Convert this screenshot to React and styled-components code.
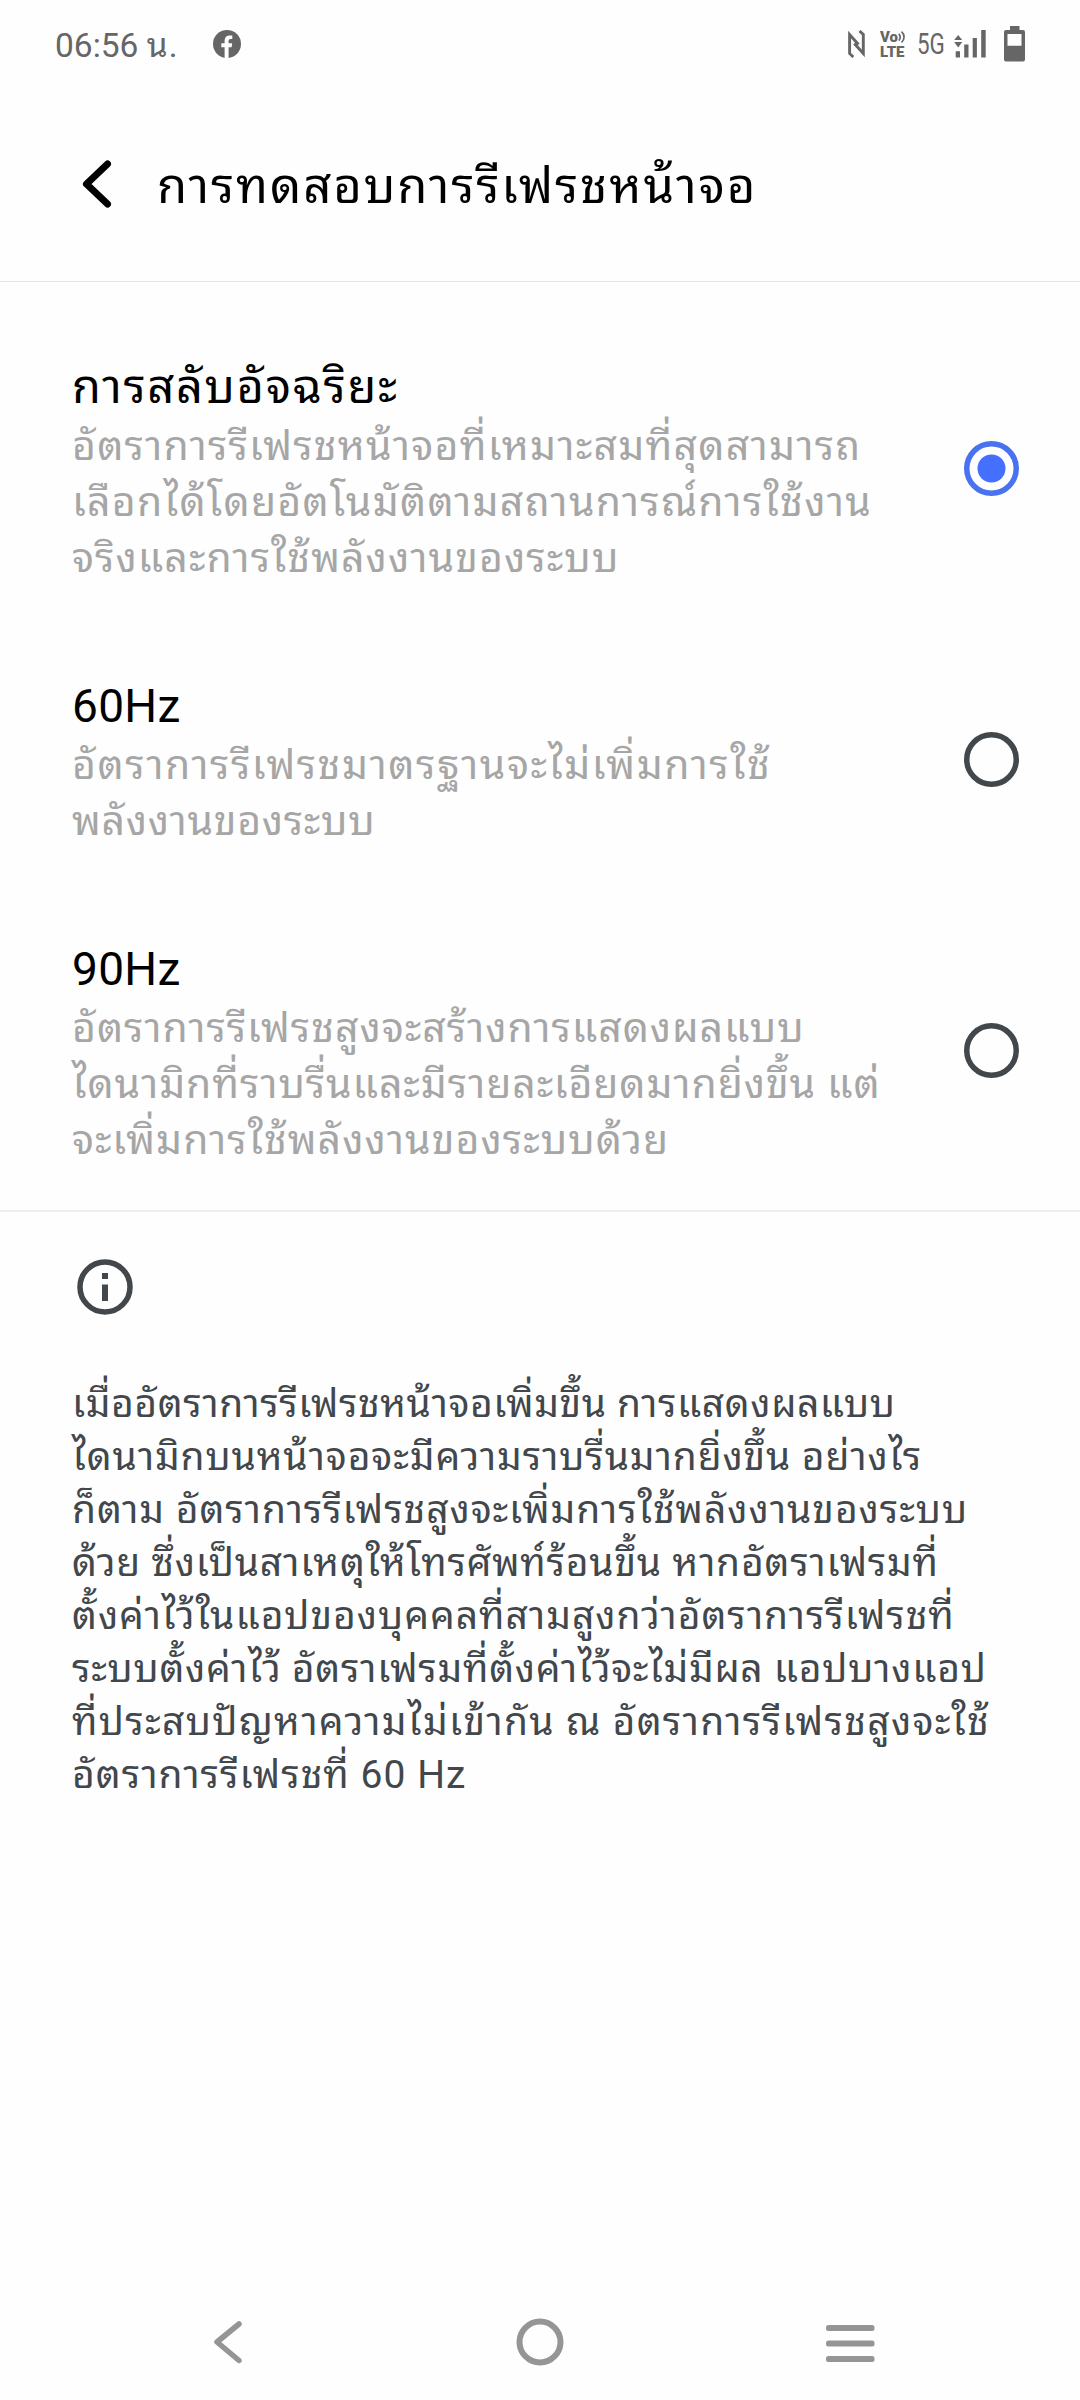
import React, { useState } from "react";
import styled, { createGlobalStyle } from "styled-components";

const GlobalStyle = createGlobalStyle`
  * { box-sizing: border-box; }
  body { margin: 0; background: #fefefe; }
`;

const Screen = styled.div`
  display: flex;
  flex-direction: column;
  width: 1080px;
  height: 2400px;
  background: #fefefe;
  color: #000;
  font-family: Roboto, "Noto Sans Thai Looped", "Noto Sans Thai", sans-serif;
`;

const StatusBar = styled.header`
  display: flex;
  justify-content: space-between;
  align-items: center;
  height: 88px;
  padding: 0 55px;
  color: #666;
`;

const StatusGroup = styled.div`
  display: flex;
  align-items: center;
`;

const StatusItem = styled.div`
  display: flex;
  margin-left: ${(p) => p.$before || 0}px;
`;

const Clock = styled.span`
  font-size: 33.5px;
  font-weight: 450;
  line-height: 40px;
  white-space: pre;
  margin-top: 3px;
`;

const ClockUnit = styled.span`
  font-weight: 400;
  letter-spacing: 1px;
`;

const Volte = styled.div`
  display: grid;
  width: 27px;
  margin-top: 1px;
  font-size: 15px;
  font-weight: 900;
  line-height: 14.5px;
`;

const VolteTop = styled.span`
  display: flex;
  height: 14.5px;
  svg {
    flex: none;
    margin-top: 1px;
  }
`;

const Network = styled.div`
  width: 28px;
  font-size: 29.5px;
  font-weight: 450;
  line-height: 32px;
  transform: scaleX(0.76);
  transform-origin: left center;
`;

const TitleBar = styled.div`
  display: flex;
  align-items: center;
  height: 194px;
  padding: 0 0 2px 80px;
  border-bottom: 1px solid #e6e6e6;
`;

const IconButton = styled.button`
  display: flex;
  padding: 0;
  border: 0;
  background: none;
`;

const PageTitle = styled.h1`
  margin: 0 0 0 43px;
  padding-top: 7px;
  font-size: 49px;
  font-weight: 400;
  line-height: 64px;
`;

const Options = styled.div`
  display: flex;
  flex-direction: column;
  padding-top: 27px;
  border-bottom: 2px solid #ededed;
`;

const Option = styled.div`
  display: flex;
  justify-content: space-between;
  align-items: center;
  padding: 0 61px 0 72px;
`;

const OptionText = styled.div`
  padding: 50px 0 42px;
`;

const OptionTitle = styled.div`
  margin-bottom: 3px;
  font-size: ${(p) => p.$size}px;
  line-height: 56px;
`;

const Description = styled.div`
  color: #a6a6a6;
  font-size: 41px;
  line-height: 56px;
`;

const Line = styled.div`
  white-space: nowrap;
  letter-spacing: ${(p) => p.$tracking || 0}px;
`;

const Info = styled.section`
  flex: 1;
  padding: 47px 72px 0;
  color: #42474c;
`;

const InfoIconWrap = styled.div`
  display: flex;
  margin-bottom: 63px;
  padding-left: 5px;
`;

const InfoText = styled.div`
  font-size: 39px;
  line-height: 53px;
`;

const NavBar = styled.nav`
  display: flex;
  align-items: center;
  justify-content: space-between;
  height: 116px;
  padding: 0 203px 0 211px;
`;

const HomeButton = styled(IconButton)`
  margin-left: 12px;
`;

const RadioButton = styled(IconButton)`
  cursor: pointer;
`;

const Radio = ({ checked, onSelect, label }) => (
  <RadioButton role="radio" aria-checked={checked} aria-label={label} onClick={onSelect}>
    <svg width="55" height="55" viewBox="0 0 55 55" fill="none">
      <circle cx="27.5" cy="27.5" r="24.75" stroke={checked ? "#4a72f0" : "#42474c"} strokeWidth="5.5" />
      {checked && <circle cx="27.5" cy="27.5" r="14" fill="#456fff" />}
    </svg>
  </RadioButton>
);

const options = [
  {
    title: "การสลับอัจฉริยะ",
    size: 47,
    tracking: 1.65,
    lines: [
      ["อัตราการรีเฟรชหน้าจอที่เหมาะสมที่สุดสามารถ", 1.2],
      ["เลือกได้โดยอัตโนมัติตามสถานการณ์การใช้งาน", 1.28],
      ["จริงและการใช้พลังงานของระบบ", 1.05],
    ],
  },
  {
    title: "60Hz",
    size: 46,
    tracking: 0.3,
    lines: [
      ["อัตราการรีเฟรชมาตรฐานจะไม่เพิ่มการใช้", 1.55],
      ["พลังงานของระบบ", 0.68],
    ],
  },
  {
    title: "90Hz",
    size: 46,
    tracking: 0.3,
    lines: [
      ["อัตราการรีเฟรชสูงจะสร้างการแสดงผลแบบ", 0.96],
      ["ไดนามิกที่ราบรื่นและมีรายละเอียดมากยิ่งขึ้น แต่", 0.9],
      ["จะเพิ่มการใช้พลังงานของระบบด้วย", 1.04],
    ],
  },
];

const infoLines = [
  ["เมื่ออัตราการรีเฟรชหน้าจอเพิ่มขึ้น การแสดงผลแบบ", 0.57],
  ["ไดนามิกบนหน้าจอจะมีความราบรื่นมากยิ่งขึ้น อย่างไร", 0.87],
  ["ก็ตาม อัตราการรีเฟรชสูงจะเพิ่มการใช้พลังงานของระบบ", 0.95],
  ["ด้วย ซึ่งเป็นสาเหตุให้โทรศัพท์ร้อนขึ้น หากอัตราเฟรมที่", 0.77],
  ["ตั้งค่าไว้ในแอปของบุคคลที่สามสูงกว่าอัตราการรีเฟรชที่", 0.96],
  ["ระบบตั้งค่าไว้ อัตราเฟรมที่ตั้งค่าไว้จะไม่มีผล แอปบางแอป", 0.72],
  ["ที่ประสบปัญหาความไม่เข้ากัน ณ อัตราการรีเฟรชสูงจะใช้", 1.29],
  ["อัตราการรีเฟรชที่ 60 Hz", 1.02],
];

export default function App() {
  const [selected, setSelected] = useState(0);
  return (
    <Screen>
      <GlobalStyle />
      <StatusBar>
        <StatusGroup>
          <Clock>06:56 <ClockUnit>น.</ClockUnit></Clock>
          <StatusItem $before={35}>
            <svg width="28" height="28" viewBox="0 0 28 28">
              <circle cx="14" cy="14" r="14" fill="#666" />
              <path d="M11.6 28V17.2H8.3v-3.9h3.3v-2.6c0-3.5 2-5.3 5-5.3 1.4 0 2.7.2 2.7.2v3.5h-1.7c-1.5 0-2 .9-2 1.9v2.3h3.6l-.6 3.9h-3V28z" fill="#fefefe" />
            </svg>
          </StatusItem>
        </StatusGroup>
        <StatusGroup>
          <StatusItem>
            <svg width="17" height="28" viewBox="0 0 17 28" fill="none" stroke="#666" strokeWidth="2.9">
              <path d="M5.3 27L1.6 23.5V4.5L10.5 14.5" />
              <path d="M11.5 1L15.3 4.5V23.5L6.3 13.5" />
            </svg>
          </StatusItem>
          <StatusItem $before={15}>
            <Volte>
              <VolteTop>
                Vo
                <svg width="8" height="12" viewBox="0 0 8 12" fill="none" stroke="#666" strokeWidth="1.7">
                  <path d="M.8 2.8c1.9 1.8 1.9 5 0 6.8" />
                  <path d="M3.5.7c3.4 2.7 3.400 8 0 10.7" />
                </svg>
              </VolteTop>
              <span>LTE</span>
            </Volte>
          </StatusItem>
          <StatusItem $before={10}>
            <Network>5G</Network>
          </StatusItem>
          <StatusItem $before={9}>
            <svg width="32" height="28" viewBox="0 0 32 28" fill="#666">
              <path d="M4.2 5L8.2 10H.2zM.2 12h8l-4 5.5z" />
              <path d="M1.7 21.3h4.3v6.2H1.7zM10.2 14.5h4.3v13h-4.3zM18.7 8h4.2v19.5h-4.2zM27.2 0h4.5v27.5h-4.5z" />
            </svg>
          </StatusItem>
          <StatusItem $before={18}>
            <svg width="21" height="36" viewBox="0 0 21 36" fill="#666" fillRule="evenodd">
              <path d="M6 0h9.5v4H19a2 2 0 0 1 2 2v27.5a2 2 0 0 1-2 2H2a2 2 0 0 1-2-2V6a2 2 0 0 1 2-2h4zM3.5 8v11.7h14V8z" />
            </svg>
          </StatusItem>
        </StatusGroup>
      </StatusBar>

      <TitleBar>
        <IconButton aria-label="ย้อนกลับ">
          <svg width="34" height="50" viewBox="0 0 34 50" fill="none" stroke="#000" strokeWidth="7" strokeLinecap="round" strokeLinejoin="round">
            <path d="M27.500 5L6.500 25l21 20" />
          </svg>
        </IconButton>
        <PageTitle>
          <Line $tracking={1.9}>การทดสอบการรีเฟรชหน้าจอ</Line>
        </PageTitle>
      </TitleBar>

      <Options role="radiogroup">
        {options.map((option, i) => (
          <Option key={option.title}>
            <OptionText>
              <OptionTitle $size={option.size}>
                <Line $tracking={option.tracking}>{option.title}</Line>
              </OptionTitle>
              <Description>
                {option.lines.map(([text, tracking]) => (
                  <Line key={text} $tracking={tracking}>{text}</Line>
                ))}
              </Description>
            </OptionText>
            <Radio checked={selected === i} label={option.title} onSelect={() => setSelected(i)} />
          </Option>
        ))}
      </Options>

      <Info>
        <InfoIconWrap>
          <svg width="56" height="56" viewBox="0 0 56 56" fill="none">
            <circle cx="28" cy="28" r="25" stroke="#42474c" strokeWidth="5.5" />
            <path d="M25 14h6v6h-6zM25 25.5h6v16.5h-6z" fill="#42474c" />
          </svg>
        </InfoIconWrap>
        <InfoText>
          {infoLines.map(([text, tracking]) => (
            <Line key={text} $tracking={tracking}>{text}</Line>
          ))}
        </InfoText>
      </Info>

      <NavBar>
        <IconButton aria-label="กลับ">
          <svg width="34" height="50" viewBox="0 0 34 50" fill="none" stroke="#959595" strokeWidth="5.5" strokeLinecap="round" strokeLinejoin="round">
            <path d="M28 7L6 25l22 18.5" />
          </svg>
        </IconButton>
        <HomeButton aria-label="หน้าหลัก">
          <svg width="48" height="48" viewBox="0 0 48 48" fill="none">
            <circle cx="24" cy="24" r="20.500" stroke="#959595" strokeWidth="6" />
          </svg>
        </HomeButton>
        <IconButton aria-label="เมนู">
          <svg width="54" height="40" viewBox="0 0 54 40" fill="#959595">
            <rect x="3" y="3" width="48.5" height="6" rx="2.500" />
            <rect x="3" y="18.5" width="48.5" height="6" rx="2.500" />
            <rect x="3" y="34" width="48.5" height="6" rx="2.500" />
          </svg>
        </IconButton>
      </NavBar>
    </Screen>
  );
}
